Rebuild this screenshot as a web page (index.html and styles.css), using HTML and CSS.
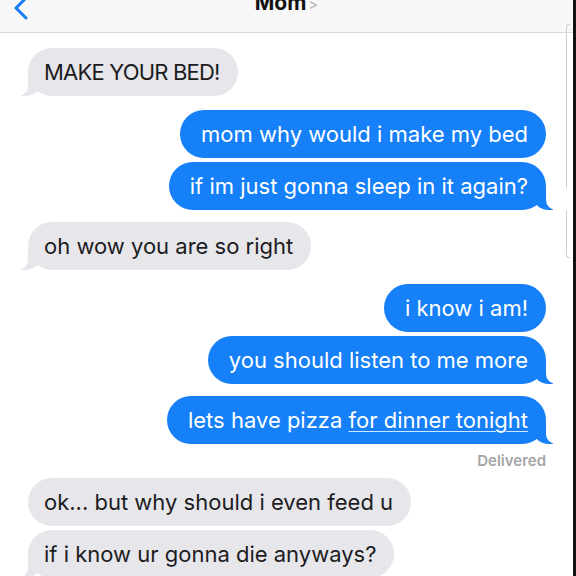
FILE: index.html
```html
<!DOCTYPE html>
<html lang="en">
<head>
    <meta charset="UTF-8">
    <meta name="viewport" content="width=device-width, initial-scale=1.0">
    <title>Mom</title>
    <link rel="stylesheet" href="styles.css">
</head>
<body>
    <div class="phone">
        <header class="top-bar">
            <svg class="back" width="16" height="24" viewBox="0 0 16 24">
                <path d="M13 -2 L3 8 L13 18" fill="none" stroke="#1a7ff5" stroke-width="3" stroke-linecap="round" stroke-linejoin="round"/>
            </svg>
            <div class="title">Mom<span class="chev">&gt;</span></div>
        </header>

        <div class="scrollbar"></div>

        <main class="thread">
            <div class="msg them tail first caps">MAKE YOUR BED!</div>

            <div class="msg me switch">mom why would i make my bed</div>
            <div class="msg me tail same">if im just gonna sleep in it again?</div>

            <div class="msg them tail group">oh wow you are so right</div>

            <div class="msg me switch">i know i am!</div>
            <div class="msg me tail same">you should listen to me more</div>
            <div class="msg me tail group">lets have pizza <span class="link">for dinner tonight</span></div>
            <div class="status">Delivered</div>

            <div class="msg them after-status">ok... but why should i even feed u</div>
            <div class="msg them tail same">if i know ur gonna die anyways?</div>
        </main>
    </div>
</body>
</html>
```

FILE: styles.css
```css
html, body {
    margin: 0;
    padding: 0;
    background: #111;
}

body {
    width: 576px;
    height: 576px;
    overflow: hidden;
    font-family: Inter, "Liberation Sans", Arial, sans-serif;
}

.phone {
    position: relative;
    width: 573px;
    height: 576px;
    background: #fff;
    overflow: hidden;
}

.top-bar {
    height: 33px;
    box-sizing: border-box;
    background: #f7f7f7;
    border-bottom: 1px solid #dadada;
    display: flex;
    justify-content: center;
    position: relative;
}

.back {
    position: absolute;
    left: 13px;
    top: 0;
}

.title {
    margin-top: -9px;
    font-size: 21px;
    line-height: 24px;
    font-weight: 700;
    color: #111;
}

.chev {
    font-weight: 400;
    font-size: 15px;
    color: #b5b5b5;
    margin-left: 2px;
}

.scrollbar {
    position: absolute;
    right: 3px;
    top: 24px;
    width: 3px;
    height: 232px;
    border: 1px solid #cfcfcf;
    border-right: none;
    border-radius: 3px 0 0 3px;
}

.thread {
    display: flex;
    flex-direction: column;
    padding: 0 27px 0 28px;
}

.msg {
    position: relative;
    max-width: 420px;
    padding: 11px 18px 11px 16px;
    border-radius: 24px;
    font-size: 22px;
    line-height: 26px;
    white-space: nowrap;
}

.caps {
    letter-spacing: -0.8px;
}

.them {
    align-self: flex-start;
    background: #e6e6eb;
    color: #1c1c1e;
}

.me {
    align-self: flex-end;
    padding-left: 21px;
    background: #1580f8;
    color: #fff;
}

.first { margin-top: 15px; }
.same { margin-top: 4px; }
.group { margin-top: 12px; }
.switch { margin-top: 14px; }
.after-status { margin-top: 8px; }

/* bubble tails */
.tail::before,
.tail::after {
    content: "";
    position: absolute;
    bottom: 0;
    height: 22px;
}

.me.tail::before {
    right: -7px;
    width: 20px;
    background: #1580f8;
    border-bottom-left-radius: 16px 14px;
}

.me.tail::after {
    right: -26px;
    width: 26px;
    background: #fff;
    border-bottom-left-radius: 10px;
}

.them.tail::before {
    left: -7px;
    width: 20px;
    background: #e6e6eb;
    border-bottom-right-radius: 16px 14px;
}

.them.tail::after {
    left: -26px;
    width: 26px;
    background: #fff;
    border-bottom-right-radius: 10px;
}

.link {
    text-decoration: underline;
    text-decoration-thickness: 1px;
    text-underline-offset: 3px;
    text-decoration-color: rgba(255, 255, 255, 0.8);
}

.status {
    align-self: flex-end;
    margin-top: 8px;
    font-size: 15px;
    line-height: 18px;
    font-weight: 600;
    color: #a5a5a5;
}
```
